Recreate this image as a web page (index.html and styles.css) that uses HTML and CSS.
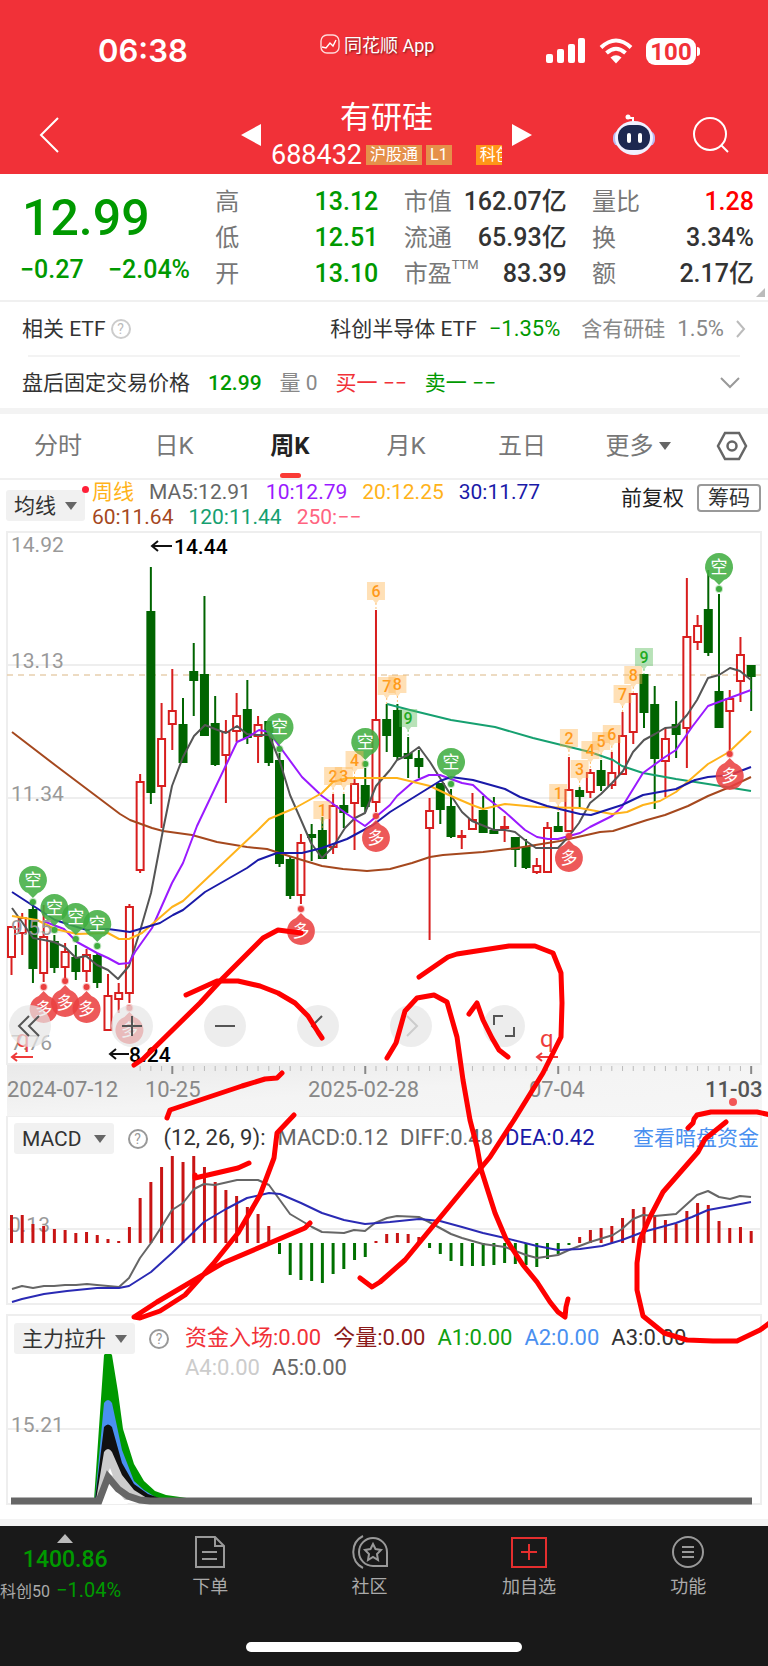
FILE: index.html
```
<!DOCTYPE html>
<html lang="zh-CN">
<head>
    <meta charset="UTF-8">
    <meta name="viewport" content="width=device-width, initial-scale=1.0">
    <title>有研硅 688432</title>
    <link rel="stylesheet" href="styles.css">
</head>
<body>
    <header class="top">
        <div class="status">
            <span class="clock">06:38</span>
            <span class="app-name">
                <svg width="20" height="20" viewBox="0 0 20 20" fill="none" stroke="#ffd9d9" stroke-width="1.4">
                    <rect x="1" y="1" width="18" height="18" rx="6"/>
                    <path d="M2 13l4 1 4-5 3 3 3-6" stroke="#fff"/>
                </svg>
                同花顺 App
            </span>
            <span class="signals">
                <svg width="40" height="26" viewBox="0 0 40 26" fill="#fff">
                    <rect x="0" y="16" width="7" height="9" rx="2"/>
                    <rect x="11" y="11" width="7" height="14" rx="2"/>
                    <rect x="22" y="6" width="7" height="19" rx="2"/>
                    <rect x="32" y="0" width="7" height="25" rx="2"/>
                </svg>
                <svg width="34" height="26" viewBox="0 0 34 26" fill="none" stroke="#fff" stroke-width="4">
                    <path d="M2 9.500Q17-4.500 32 9.500"/>
                    <path d="M7.500 15Q17 6.500 26.500 15"/>
                    <path d="M17 25.500l-5.500-6q5.500-4.500 11 0z" fill="#fff" stroke="none"/>
                </svg>
                <span class="battery">100</span>
            </span>
        </div>
        <div class="title-bar">
            <button class="icon-btn" aria-label="返回">
                <svg width="22" height="38" viewBox="0 0 22 38" fill="none" stroke="#fff" stroke-width="2">
                    <path d="M20 2L3 19l17 17"/>
                </svg>
            </button>
            <button class="icon-btn prev" aria-label="上一只">
                <svg width="20" height="24" viewBox="0 0 20 24" fill="#fff"><path d="M20 1v22L0 12z"/></svg>
            </button>
            <div class="stock">
                <h1>有研硅</h1>
                <div class="code">
                    <span>688432</span>
                    <span class="tag">沪股通</span>
                    <span class="tag">L1</span>
                    <span class="tag board">科创</span>
                </div>
            </div>
            <button class="icon-btn next" aria-label="下一只">
                <svg width="20" height="24" viewBox="0 0 20 24" fill="#fff"><path d="M0 1v22l20-11z"/></svg>
            </button>
            <button class="icon-btn robot" aria-label="智能助手">
                <svg width="44" height="42" viewBox="0 0 44 42">
                    <path d="M21 8V4h-4" fill="none" stroke="#fff" stroke-width="2"/>
                    <circle cx="16" cy="3" r="2.500" fill="#fff"/>
                    <rect x="1" y="17" width="42" height="15" rx="6" fill="#b9b8f0"/>
                    <ellipse cx="22" cy="24" rx="19" ry="17" fill="#f1f1ff"/>
                    <rect x="6" y="11" width="32" height="25" rx="12" fill="#1d2850"/>
                    <rect x="15" y="19" width="4" height="10" rx="2" fill="#fff"/>
                    <rect x="26" y="19" width="4" height="10" rx="2" fill="#fff"/>
                </svg>
            </button>
            <button class="icon-btn" aria-label="搜索">
                <svg width="38" height="38" viewBox="0 0 38 38" fill="none" stroke="#fff" stroke-width="2">
                    <circle cx="18" cy="18" r="16"/>
                    <path d="M29 29l7 7"/>
                </svg>
            </button>
        </div>
    </header>

    <section class="quote">
        <div class="price down">
            <strong>12.99</strong>
            <div><span>−0.27</span><span>−2.04%</span></div>
        </div>
        <dl>
            <div><dt>高</dt><dd class="down">13.12</dd></div>
            <div><dt>低</dt><dd class="down">12.51</dd></div>
            <div><dt>开</dt><dd class="down">13.10</dd></div>
        </dl>
        <dl>
            <div><dt>市值</dt><dd>162.07亿</dd></div>
            <div><dt>流通</dt><dd>65.93亿</dd></div>
            <div><dt>市盈<sup>TTM</sup></dt><dd>83.39</dd></div>
        </dl>
        <dl>
            <div><dt>量比</dt><dd class="up">1.28</dd></div>
            <div><dt>换</dt><dd>3.34%</dd></div>
            <div><dt>额</dt><dd>2.17亿</dd></div>
        </dl>
        <i class="corner"></i>
    </section>

    <section class="info">
        <div class="info-row">
            <span>相关 ETF</span>
            <span class="help light">?</span>
            <span class="push">科创半导体 ETF</span>
            <span class="down num">−1.35%</span>
            <span class="muted hold">含有研硅</span>
            <span class="muted num">1.5%</span>
            <svg class="chev" width="10" height="22" viewBox="0 0 10 22" fill="none" stroke="#bbb" stroke-width="2"><path d="M1 3l7 8-7 8"/></svg>
        </div>
        <div class="info-row fixed">
            <span>盘后固定交易价格</span>
            <b class="down">12.99</b>
            <span class="muted">量 0</span>
            <span class="buy">买一 −−</span>
            <span class="down">卖一 −−</span>
            <svg class="push" width="20" height="14" viewBox="0 0 20 14" fill="none" stroke="#999" stroke-width="2"><path d="M1 2l9 9 9-9"/></svg>
        </div>
    </section>

    <nav class="tabs">
        <button>分时</button>
        <button>日K</button>
        <button class="active">周K</button>
        <button>月K</button>
        <button>五日</button>
        <button>更多<i class="caret"></i></button>
        <button aria-label="设置">
            <svg width="32" height="30" viewBox="0 0 32 30" fill="none" stroke="#666" stroke-width="2.500">
                <path d="M9 2h14l7 13-7 13H9L2 15z"/>
                <circle cx="16" cy="15" r="4.500"/>
            </svg>
        </button>
    </nav>

    <section class="ma">
        <button class="pick dot">均线<i class="caret"></i></button>
        <div class="ma-values">
            <span class="c-20">周线</span><span class="c-5">MA5:12.91</span><span class="c-10">10:12.79</span><span class="c-20">20:12.25</span><span class="c-30">30:11.77</span>
            <br>
            <span class="c-60">60:11.64</span><span class="c-120">120:11.44</span><span class="c-250">250:−−</span>
        </div>
        <span class="adjust">前复权</span>
        <button class="chips">筹码</button>
    </section>

    <main class="charts">
        <div class="kline">
            <svg viewBox="0 530 768 586">
                <defs>
                    <linearGradient id="axis" x1="0" x2="1" y1="0" y2="1">
                        <stop offset="0" stop-color="#e9e9e9"/>
                        <stop offset="0.5" stop-color="#f4f4f4"/>
                        <stop offset="1" stop-color="#f6f6f6"/>
                    </linearGradient>
                </defs>
                <rect x="7" y="1064" width="755" height="52" fill="url(#axis)"/>
                <g class="frame">
                    <path d="M7 532H761V1064H7zM7 665H761M7 798H761M7 932H761"/>
                </g>
                <path d="M7 675H761" stroke="#e8cfae" stroke-width="1.500" stroke-dasharray="6 5"/>
                <g id="candles"></g>
                <g class="line">
                    <polyline stroke="#a5481e" points="12,732 55,765 120,814 130,820 152,828 163,831 192,835 217,842 247,847 267,849 292,857 322,866 343,869 367,871 390,869 412,863 430,857 443,855 483,852 517,848 560,841 600,832 613,831 647,820 665,815 688,806 708,796 730,787 751,777"/>
                    <polyline stroke="#16a070" points="387,704 410,710 451,720 495,727 533,738 590,752 613,760 622,766 643,773 676,779 708,784 751,791"/>
                    <polyline stroke="#555" points="12,908 22,922 33,938 44,940 54,942 65,947 76,958 86,956 97,965 108,970 118,979 129,966 140,931 151,893 163,830 172,786 183,757 194,736 205,725 215,729 226,733 237,726 247,734 258,735 269,735 280,762 290,795 301,820 311,843 322,858 333,847 345,828 355,818 365,813 376,786 390,770 397,760 408,755 419,747 430,762 440,778 452,797 462,812 472,821 494,830 505,830 515,832 526,841 536,848 558,848 569,836 579,823 590,803 601,794 612,783 623,771 633,752 644,740 655,734 665,728 676,727 687,715 697,700 708,678 719,675 730,668 740,671 751,680"/>
                    <polyline stroke="#9a1aff" points="43,921 64,929 77,942 97,953 108,958 119,964 129,963 135,952 152,928 172,883 183,863 197,826 237,742 248,737 259,730 269,732 302,777 322,796 347,814 365,826 390,805 397,796 413,782 429,775 440,775 462,783 473,785 487,798 505,812 525,830 537,837 548,839 558,839 580,833 590,827 612,816 622,807 643,773 665,757 676,750 692,727 708,706 751,690"/>
                    <polyline stroke="#ffb31a" points="12,916 37,920 55,929 77,934 108,933 119,939 129,939 142,933 172,907 183,901 258,830 269,819 295,808 322,793 333,782 347,778 397,778 430,786 451,796 472,805 483,809 505,804 537,807 580,808 612,814 627,812 643,805 660,801 676,792 708,764 729,752 751,731"/>
                    <polyline stroke="#1a1aa8" points="12,892 55,920 77,927 87,930 108,929 130,932 140,929 160,923 173,915 183,910 205,892 247,868 258,860 277,853 302,853 322,848 347,839 373,825 390,812 440,781 451,777 473,780 505,789 520,797 547,806 580,814 591,815 622,805 643,795 676,789 695,780 708,777 730,775 751,767"/>
                </g>
                <g id="marks"></g>
                <g class="scale">
                    <text x="11" y="552">14.92</text>
                    <text x="11" y="668">13.13</text>
                    <text x="11" y="801">11.34</text>
                    <text x="11" y="935">9.55</text>
                    <text x="11" y="1050">7.76</text>
                </g>
                <g class="extreme">
                    <path d="M172 546H152M158 541l-6 5 6 5M129 1054H110M116 1049l-6 5 6 5"/>
                    <text x="174" y="554">14.44</text>
                    <text x="129" y="1062">8.24</text>
                </g>
                <g class="right-mark">
                    <path d="M33 1057H12M17 1053l-5 4 5 4M558 1057H537M542 1053l-5 4 5 4"/>
                    <text x="16" y="1047">q</text>
                    <text x="540" y="1047">q</text>
                </g>
                <g id="ticks"></g>
                <g class="dates">
                    <text x="7" y="1097">2024-07-12</text>
                    <text x="145" y="1097">10-25</text>
                    <text x="308" y="1097">2025-02-28</text>
                    <text x="529" y="1097">07-04</text>
                    <text class="today" x="705" y="1097">11-03</text>
                </g>
                <circle cx="733" cy="1102" r="4" fill="#f25555"/>
            </svg>
            <div class="tools">
                <button class="jump" aria-label="最早"><svg viewBox="0 0 42 42"><path d="M20 11L10 21l10 10M30 11L20 21l10 10"/></svg></button>
                <button aria-label="放大"><svg viewBox="0 0 42 42"><path d="M21 11v20M11 21h20"/></svg></button>
                <button aria-label="缩小"><svg viewBox="0 0 42 42"><path d="M11 21h20"/></svg></button>
                <button aria-label="左移"><svg viewBox="0 0 42 42"><path d="M25 11L15 21l10 10"/></svg></button>
                <button class="off" aria-label="右移"><svg viewBox="0 0 42 42"><path d="M17 11l10 10-10 10"/></svg></button>
                <button aria-label="全屏"><svg viewBox="0 0 42 42"><path d="M20 11H11v9M22 31h9v-9"/></svg></button>
            </div>
        </div>

        <div class="panel">
            <svg viewBox="0 1116 768 192">
                <path class="frame" d="M7 1116H761V1304H7zM7 1229H761"/>
                <g class="scale"><text x="9" y="1232">0.13</text></g>
                <g id="macd"></g>
                <g class="line">
                    <polyline stroke="#666" points="12,1289 22,1286 33,1288 44,1286 54,1286 65,1285 76,1285 87,1284 97,1285 119,1287 129,1278 140,1258 151,1243 162,1226 172,1210 183,1203 194,1189 204,1184 215,1185 237,1180 258,1180 269,1185 290,1214 312,1227 322,1232 344,1233 354,1230 365,1231 375,1223 387,1218 397,1216 419,1217 429,1222 451,1234 462,1238 483,1244 505,1247 526,1255 537,1258 558,1255 569,1250 590,1242 613,1235 622,1229 633,1219 643,1215 655,1216 676,1214 697,1195 708,1191 719,1197 730,1199 740,1196 751,1197"/>
                    <polyline stroke="#2a2ab4" points="12,1302 22,1299 44,1294 67,1291 97,1288 119,1288 129,1286 151,1272 172,1253 204,1222 226,1209 247,1198 269,1193 280,1194 301,1203 322,1213 344,1220 365,1224 390,1222 419,1219 440,1221 462,1227 483,1233 505,1238 537,1246 558,1250 580,1249 602,1246 622,1240 643,1232 665,1226 676,1223 692,1217 708,1210 730,1206 751,1202"/>
                </g>
            </svg>
            <div class="legend">
                <button class="pick macd-pick">MACD<i class="caret"></i></button>
                <span class="help">?</span>
                <div class="values">
                    <span>(12, 26, 9):</span><span class="c-5">MACD:0.12</span><span class="c-5">DIFF:0.48</span><span class="c-30">DEA:0.42</span>
                </div>
                <a href="#">查看暗盘资金</a>
            </div>
        </div>

        <div class="panel">
            <svg viewBox="0 1308 768 211">
                <path class="frame" d="M7 1315H761V1504H7zM7 1429H761"/>
                <g class="scale"><text x="11" y="1432">15.21</text></g>
            </svg>
            <div class="legend second">
                <button class="pick">主力拉升<i class="caret"></i></button>
                <span class="help">?</span>
                <div class="values">
                    <span class="in">资金入场:0.00</span><span class="today-vol">今量:0.00</span><span class="a1">A1:0.00</span><span class="a2">A2:0.00</span><span>A3:0.00</span>
                    <br>
                    <span class="a4">A4:0.00</span><span class="c-5">A5:0.00</span>
                </div>
            </div>
            <svg class="peak" viewBox="0 1308 768 211">
                <path fill="#009900" d="M94 1500L104 1355Q108 1349 112 1355L118 1392 123 1429 134 1464 144 1481 155 1491 166 1495 180 1497 200 1500z"/>
                <path fill="#4a90f0" d="M95 1500L104 1403Q108 1397 112 1403L122 1450 134 1481 144 1490 160 1500z"/>
                <path fill="#111" d="M95 1500L104 1427Q108 1422 112 1427L122 1463 134 1484 148 1494 165 1500z"/>
                <path fill="#ccc" d="M96 1500L104 1452Q108 1446 112 1452L122 1475 134 1490 150 1500z"/>
                <path fill="#fff" d="M101 1504L108 1480 128 1504zM108 1473l2-5 3 8z"/>
                <path fill="none" stroke="#666" stroke-width="7" d="M11 1501H99L108 1477 118 1489 128 1496 140 1500 150 1501H752"/>
            </svg>
        </div>

        <svg class="pen" viewBox="0 530 768 989">
            <polyline points="134,1065 143,1059 200,1003 223,978 263,938 278,930 301,933"/>
            <polyline points="186,995 217,981 238,981 260,986 278,993 295,1003 308,1016 318,1032 322,1038"/>
            <polyline points="282,1073 277,1078 265,1079 242,1086 170,1110 167,1118"/>
            <polyline points="294,1115 277,1133 274,1158 260,1195 238,1233 213,1264 185,1295 160,1311 140,1318 134,1317 157,1302 223,1263 305,1228 310,1223"/>
            <polyline points="195,1175 195,1178 238,1168 249,1163"/>
            <polyline points="387,1058 396,1043 405,1011 417,998 434,995 447,1002 457,1037 463,1080 470,1120 477,1147 481,1169 487,1188 495,1213 506,1239 523,1265 537,1282 550,1302 558,1312 565,1317 566,1307 568,1299"/>
            <polyline points="419,977 448,957 457,954 509,946 535,946 553,953 561,973 562,1003 561,1037 543,1073 514,1120 490,1157 405,1260 380,1282 372,1287 360,1278"/>
            <polyline points="469,1014 477,1003 483,1020 492,1038 499,1050 508,1057"/>
            <polyline points="726,1122 705,1139 698,1152 677,1176 663,1192 650,1217 640,1240 637,1263 637,1290 643,1316 664,1333 687,1340 713,1341 737,1341 760,1330 771,1322"/>
            <polyline points="688,1128 693,1123 694,1119 697,1115 711,1112 757,1112 771,1115"/>
        </svg>
    </main>

    <footer class="bottom">
        <div class="bottom-nav">
            <a class="index" href="#">
                <i class="caret"></i>
                <b>1400.86</b>
                <span class="change"><small>科创50</small>−1.04%</span>
            </a>
            <a href="#">
                <svg width="36" height="36" viewBox="0 0 36 36"><path d="M4 3h19l9 9v21H4zM23 3v9h9M10 18h15M10 25h15"/></svg>
                下单
            </a>
            <a href="#">
                <svg width="36" height="36" viewBox="0 0 36 36"><path d="M21 4a14 14 0 0 1 14 14v14H21a14 14 0 0 1 0-28zM11 2a18 18 0 0 0 0 32"/><path d="M21 10l2.500 5 5.500 1-4 4 1 6-5-3-5 3 1-6-4-4 5.500-1z"/></svg>
                社区
            </a>
            <a href="#">
                <svg class="add" width="36" height="36" viewBox="0 0 36 36"><path d="M1 4h34v29H1zM18 10v16M10 18h16"/></svg>
                加自选
            </a>
            <a href="#">
                <svg width="36" height="36" viewBox="0 0 36 36"><circle cx="18" cy="18" r="15"/><path d="M12 13h12M12 18h12M12 23h12"/></svg>
                功能
            </a>
        </div>
        <div class="home-bar"></div>
    </footer>

    <script src="script.js"></script>
</body>
</html>
```
FILE: styles.css
```
* {
    box-sizing: border-box;
}
body {
    margin: 0;
    background: #fff;
    color: #333;
    font-family: Roboto, "Noto Sans CJK SC", sans-serif;
    font-size: 21px;
}
button {
    border: 0;
    padding: 0;
    background: none;
    color: inherit;
    font: inherit;
    cursor: pointer;
}
a {
    color: inherit;
    text-decoration: none;
}
svg {
    display: block;
}
.down {
    color: #009900;
}
.up {
    color: #ff0000;
}
.muted {
    color: #888;
}
.push {
    margin-left: auto;
}
.caret {
    display: inline-block;
    border: 6px solid transparent;
    border-top: 8px solid #666;
    border-bottom: 0;
}

/* red header */
.top {
    background: #f13138;
    color: #fff;
}
.status {
    display: grid;
    grid-template-columns: 222px auto 1fr;
    align-items: center;
    height: 90px;
    padding: 12px 72px 0 98px;
}
.clock {
    font: 600 31px/40px Inter, sans-serif;
}
.app-name {
    display: flex;
    align-items: center;
    gap: 4px;
    padding-bottom: 14px;
    font-size: 18px;
    text-shadow: 1px 1px 2px rgba(0, 0, 0, 0.5);
}
.signals {
    display: flex;
    align-items: center;
    justify-content: flex-end;
    gap: 13px;
}
.battery {
    position: relative;
    width: 50px;
    height: 27px;
    border-radius: 9px;
    background: #fff;
    color: #f13138;
    font: 700 24px/28px Roboto, sans-serif;
    text-align: center;
}
.battery::after {
    content: "";
    position: absolute;
    left: 51px;
    top: 9px;
    width: 3px;
    height: 9px;
    border-radius: 0 3px 3px 0;
    background: #fff;
}
.title-bar {
    display: flex;
    align-items: center;
    height: 84px;
    padding: 6px 38px 0 38px;
}
.prev {
    margin-left: auto;
}
.stock {
    width: 251px;
    padding: 0 10px;
    text-align: center;
}
.stock h1 {
    margin: 0;
    font-size: 31px;
    line-height: 40px;
    font-weight: 400;
}
.code {
    display: flex;
    align-items: center;
    gap: 4px;
    overflow: hidden;
    white-space: nowrap;
    font-size: 27px;
    line-height: 34px;
}
.tag {
    padding: 0 4px;
    background: #e5904a;
    font-size: 16px;
    line-height: 20px;
}
.board {
    margin-left: 20px;
    background: #ff9518;
}
.robot {
    margin: 0 36px 0 80px;
}

/* quote summary */
.quote {
    position: relative;
    display: grid;
    grid-template-columns: 170px 163px 163px 162px;
    justify-content: space-between;
    padding: 10px 14px 8px 20px;
    border-bottom: 2px solid #f0f0f0;
}
.price strong {
    display: block;
    padding-left: 2px;
    font-size: 50px;
    line-height: 68px;
    font-weight: 500;
}
.price div {
    display: flex;
    justify-content: space-between;
    font-size: 25px;
    line-height: 36px;
    font-weight: 500;
    white-space: nowrap;
}
.quote dl {
    margin: 0;
}
.quote dl div {
    display: flex;
    justify-content: space-between;
    line-height: 36px;
}
.quote dt {
    color: #777;
    font-size: 24px;
    white-space: nowrap;
}
.quote dd {
    margin: 0;
    font-size: 25px;
    font-weight: 500;
    white-space: nowrap;
}
.quote sup {
    font-size: 13px;
    line-height: 0;
    vertical-align: 13px;
}
.corner {
    position: absolute;
    right: 3px;
    bottom: 3px;
    border-left: 9px solid transparent;
    border-bottom: 9px solid #bbb;
}

/* etf and after-hours rows */
.info {
    border-bottom: 6px solid #f3f3f3;
}
.info-row {
    display: flex;
    align-items: center;
    gap: 12px;
    height: 53px;
    margin: 0 22px;
    line-height: 24px;
    white-space: nowrap;
}
.info-row .num {
    font-size: 22px;
}
.info-row .hold {
    margin-left: 9px;
}
.info-row .light {
    margin-left: -7px;
}
.fixed {
    gap: 18px;
    margin: 0 28px;
    border-top: 2px solid #f3f3f3;
}
.fixed span:first-child {
    margin-left: -6px;
}
.fixed b {
    font-weight: 500;
}
.buy {
    color: #f13138;
}
.help {
    flex: none;
    width: 20px;
    height: 20px;
    border: 2px solid #999;
    border-radius: 50%;
    color: #999;
    font-size: 14px;
    line-height: 16px;
    text-align: center;
}
.light {
    border-color: #ccc;
    color: #bbb;
}

/* period tabs */
.tabs {
    display: grid;
    grid-template-columns: repeat(6, 116fr) 72fr;
    height: 66px;
    border-bottom: 2px solid #f0f0f0;
    color: #777;
    font-size: 24px;
    line-height: 28px;
}
.tabs button {
    position: relative;
    display: flex;
    align-items: center;
    justify-content: center;
    gap: 5px;
}
.tabs .active {
    color: #222;
    font-weight: 700;
}
.tabs .active::after {
    content: "";
    position: absolute;
    bottom: 0;
    width: 21px;
    height: 5px;
    border-radius: 3px;
    background: #fa3a35;
}

/* moving averages */
.ma {
    display: flex;
    align-items: flex-start;
    gap: 7px;
    height: 50px;
    padding: 0 7px 0 6px;
}
.pick {
    position: relative;
    display: flex;
    align-items: center;
    gap: 9px;
    flex: none;
    height: 31px;
    padding: 0 8px;
    border-radius: 3px;
    background: #f1f1f1;
    line-height: 24px;
    white-space: nowrap;
}
.macd-pick {
    gap: 12px;
}
.dot {
    margin-top: 10px;
}
.dot::after {
    content: "";
    position: absolute;
    right: -4px;
    top: -4px;
    width: 7px;
    height: 7px;
    border-radius: 50%;
    background: #ff2038;
}
.ma-values {
    line-height: 25px;
    white-space: nowrap;
}
.ma-values span {
    margin-right: 15px;
}
.adjust {
    margin: 4px 6px 0 auto;
    color: #222;
    line-height: 28px;
}
.chips {
    width: 64px;
    height: 28px;
    margin-top: 4px;
    border: 2px solid #999;
    border-radius: 4px;
    line-height: 24px;
}
.c-5 { color: #666; }
.c-10 { color: #9a1aff; }
.c-20 { color: #ffb31a; }
.c-30 { color: #1a1aa8; }
.c-60 { color: #a5481e; }
.c-120 { color: #16a070; }
.c-250 { color: #ff6480; }

/* charts */
.charts {
    position: relative;
    border-bottom: 7px solid #f3f3f3;
}
.charts > div > svg {
    width: 100%;
}
.frame {
    fill: none;
    stroke: #eee;
    stroke-width: 2;
}
.line {
    fill: none;
    stroke-width: 2;
    stroke-linejoin: round;
}
.rise {
    fill: #fff;
    stroke: #d81e1e;
    stroke-width: 2;
}
.fall {
    fill: #006400;
    stroke: #006400;
    stroke-width: 2;
}
.scale {
    fill: #999;
    font-size: 21px;
}
.dates {
    fill: #888;
    font-size: 22px;
}
.today {
    fill: #555;
    font-weight: 500;
}
.extreme {
    font-size: 21px;
    font-weight: 500;
}
.extreme path {
    fill: none;
    stroke: #111;
    stroke-width: 2;
}
.right-mark {
    fill: #ee3b3b;
    font-size: 24px;
}
.right-mark path {
    fill: none;
    stroke: #ee3b3b;
    stroke-width: 2;
}
.badge {
    fill: #fff;
    font-size: 17px;
    text-anchor: middle;
}
.count {
    font-size: 16px;
    font-weight: 500;
    text-anchor: middle;
}
.kline {
    position: relative;
}
.tools {
    position: absolute;
    left: 9px;
    bottom: 69px;
    display: flex;
    gap: 51px;
}
.tools button {
    width: 42px;
    height: 42px;
    border-radius: 50%;
    background: rgba(230, 230, 230, 0.7);
}
.tools svg {
    fill: none;
    stroke: #555;
    stroke-width: 2;
}
.tools .jump {
    margin-right: 9px;
}
.tools .off svg {
    stroke: #ccc;
}
.panel {
    display: grid;
}
.panel > * {
    grid-area: 1 / 1;
}
.legend {
    display: flex;
    align-items: flex-start;
    padding: 7px 9px 0 14px;
}
.second {
    padding-top: 15px;
}
.legend .help {
    margin: 6px 16px 0 14px;
}
.legend a {
    margin-left: auto;
    color: #4a90f0;
    line-height: 31px;
}
.values {
    font-size: 22px;
    line-height: 30px;
    white-space: nowrap;
}
.values span {
    margin-right: 12px;
}
.in { color: #f13138; }
.today-vol { color: #8b1a1a; }
.a1 { color: #10a010; }
.a2 { color: #4a90f0; }
.a4 { color: #ccc; }
.pen {
    position: absolute;
    top: 0;
    left: 0;
    width: 100%;
    pointer-events: none;
    fill: none;
    stroke: #ff0000;
    stroke-width: 5;
    stroke-linecap: round;
    stroke-linejoin: round;
}

/* bottom bar */
.bottom {
    padding-bottom: 14px;
    background: #191919;
    color: #aaa;
}
.bottom-nav {
    display: grid;
    grid-template-columns: 131fr repeat(4, 160fr);
    height: 116px;
    font-size: 18px;
}
.bottom-nav a {
    display: flex;
    flex-direction: column;
    align-items: center;
    gap: 4px;
    padding-top: 8px;
    line-height: 26px;
}
.bottom-nav svg {
    fill: none;
    stroke: #999;
    stroke-width: 2;
}
.bottom-nav .add {
    stroke: #e52e2e;
}
.bottom-nav .index {
    gap: 0;
    color: #009900;
}
.index .caret {
    border: 8px solid transparent;
    border-top: 0;
    border-bottom: 9px solid #bbb;
}
.index b {
    font-size: 23px;
    line-height: 34px;
    font-weight: 500;
}
.change {
    width: 100%;
    font-size: 20px;
    white-space: nowrap;
}
.change small {
    margin-right: 6px;
    color: #aaa;
    font-size: 16px;
}
.home-bar {
    width: 36%;
    height: 10px;
    margin: 0 auto;
    border-radius: 5px;
    background: #fff;
}
```
FILE: script.js
```
const NS = 'http://www.w3.org/2000/svg';
const STEP = 10.72;
const START = 11.5;

function xAt(i) {
    return START + i * STEP;
}

function add(parent, tag, attrs, text) {
    const el = document.createElementNS(NS, tag);
    for (const key in attrs) el.setAttribute(key, attrs[key]);
    if (text) el.textContent = text;
    parent.appendChild(el);
}

// [rise, high, body top, body bottom, low]
const candles = [
    [1,927,927,957,975],[1,913,918,933,955],[0,904,910,968,983],[1,905,937,973,982],[0,935,942,967,973],
    [1,943,952,967,978],[0,945,958,971,980],[1,949,955,971,982],[0,953,956,982,988],[1,974,996,1030,1030],
    [1,983,993,999,1013],[1,904,907,993,1003],[1,774,782,870,873],[0,567,612,792,804],[1,703,739,786,828],
    [1,669,711,724,750],[0,698,725,762,762],[0,643,672,680,716],[0,596,675,735,735],[0,696,724,764,766],
    [1,720,732,755,803],[1,693,716,731,742],[0,680,710,737,744],[1,716,725,736,763],[0,722,722,762,766],
    [0,753,761,863,867],[0,857,860,895,899],[1,834,843,895,904],[0,824,835,837,861],[0,817,831,858,858],
    [1,794,806,847,854],[0,794,806,812,828],[1,778,784,803,850],[0,768,786,806,812],[1,610,720,802,812],
    [0,704,720,735,752],[0,704,711,756,760],[0,737,754,758,778],[0,750,759,766,778],[1,798,811,828,940],
    [0,784,784,809,824],[0,789,807,836,838],[1,830,836,837,849],[1,793,820,829,829],[0,796,811,832,832],
    [0,797,831,833,833],[1,816,827,828,842],[0,838,838,849,867],[0,839,848,867,869],[1,858,866,872,874],
    [1,822,828,872,872],[0,812,827,831,831],[1,757,790,831,831],[0,787,791,796,809],[1,769,773,792,798],
    [0,760,771,785,791],[1,752,773,785,789],[1,712,736,774,774],[1,694,694,732,744],[0,675,675,712,728],
    [0,686,705,758,809],[1,728,739,761,797],[0,701,725,734,758],[1,578,637,728,768],[1,615,626,642,650],
    [0,570,610,652,656],[0,594,692,727,727],[1,690,699,711,752],[1,637,655,681,702],[0,666,666,676,711]
];

const candleLayer = document.getElementById('candles');
candles.forEach(([rise, high, top, bottom, low], i) => {
    const x = xAt(i);
    const cls = rise ? 'rise' : 'fall';
    add(candleLayer, 'path', { class: cls, d: `M${x} ${high}V${top}M${x} ${bottom}V${low}` });
    add(candleLayer, 'rect', { class: cls, x: x - 3.5, y: top, width: 7, height: bottom - top });
});

// buy / sell badges: [candle, centre y, short]
const marks = document.getElementById('marks');
const badges = [
    [2,880,1],[4,908,1],[6,917,1],[8,924,1],[25,727,1],[33,742,1],[41,762,1],[66,567,1],
    [3,1009,0],[5,1003,0],[7,1009,0],[11,1030,0],[27,931,0],[34,838,0],[52,858,0],[67,776,0]
];
badges.forEach(([i, y, isShort]) => {
    const x = xAt(i);
    const dir = isShort ? 1 : -1;
    const fill = isShort ? '#40ad40' : '#ea4040';
    add(marks, 'path', {
        fill, 'fill-opacity': 0.87,
        d: `M${x - 5} ${y + 13 * dir}A14 14 0 1 ${isShort} ${x + 5} ${y + 13 * dir}L${x} ${y + 18 * dir}z`
    });
    add(marks, 'circle', { cx: x, cy: y + 22 * dir, r: 3, fill, stroke: fill, 'stroke-opacity': 0.3, 'stroke-width': 2 });
    add(marks, 'text', { class: 'badge', x, y: y + 6 }, isShort ? '空' : '多');
});

// sequence counts: [candle, centre y, number]
const counts = [
    [29,810,1],[30,776,2],[31,776,3],[32,760,4],[34,591,6],[35,686,7],[36,684,8],[37,718,9],
    [51,793,1],[52,738,2],[53,769,3],[54,750,4],[55,741,5],[56,734,6],[57,694,7],[58,675,8],[59,657,9]
];
counts.forEach(([i, y, n]) => {
    const x = xAt(i);
    const color = n === 9 ? '#22aa22' : '#ff9a1a';
    add(marks, 'path', {
        fill: n === 9 ? '#55bb55' : '#ffb650', 'fill-opacity': 0.42,
        d: `M${x - 9} ${y - 9}h18v18h-6l-3 4-3-4h-6z`
    });
    add(marks, 'path', { d: `M${x} ${y + 12}v8`, stroke: color, 'stroke-opacity': 0.6, 'stroke-dasharray': '2 2' });
    add(marks, 'text', { class: 'count', x, y: y + 6, fill: color }, String(n));
});

const ticks = document.getElementById('ticks');
for (let i = 12; i < 70; i++) {
    const major = (i - 15) % 18 === 0;
    add(ticks, 'path', {
        d: `M${xAt(i)} 1066v${major ? 8 : 5}`,
        stroke: major ? '#888' : '#bbb', 'stroke-width': major ? 2 : 1
    });
}

const macd = [
    28,28,19,17,14,13,10,11,8,4,2,16,45,61,76,87,81,87,76,61,53,47,36,29,17,
    -11,-32,-37,-38,-40,-31,-26,-17,-14,2,9,10,9,6,-5,-11,-18,-23,-23,-23,-22,-20,-21,-22,-24,
    -16,-11,-2,6,13,15,17,25,34,36,28,23,19,32,40,38,22,15,16,12
];
const macdLayer = document.getElementById('macd');
macd.forEach((v, i) => {
    add(macdLayer, 'path', {
        d: `M${xAt(i)} 1243v${-v}`,
        stroke: v > 0 ? '#c81414' : '#007000', 'stroke-width': 3
    });
});
```
